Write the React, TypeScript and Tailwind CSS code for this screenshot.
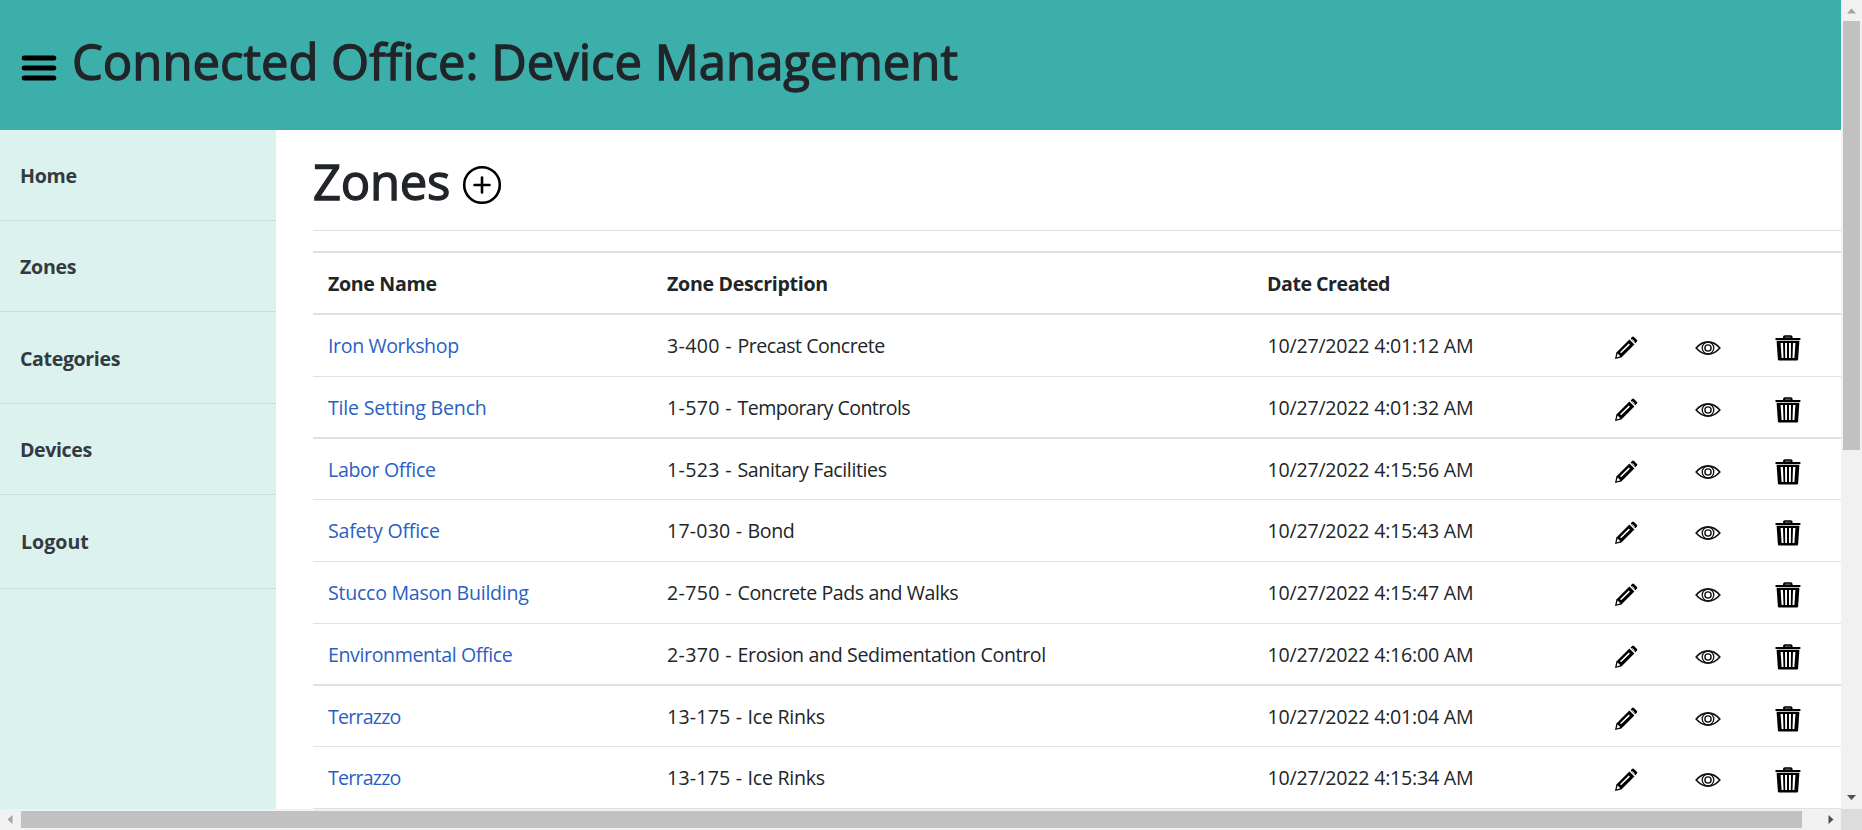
import React from 'react';

type Zone = {
  name: string;
  nameCls: string;
  code: string;
  codeCls: string;
  desc: string;
  descCls: string;
  date: string;
  row: string;
};

const zones: Zone[] = [
  { name: 'Iron Workshop', nameCls: 'tracking-[-0.38px]', code: '3-400 - ', codeCls: 'tracking-[0.36px]', desc: 'Precast Concrete', descCls: 'tracking-[-0.48px]', date: '10/27/2022 4:01:12 AM', row: 'h-[62px] border-b' },
  { name: 'Tile Setting Bench', nameCls: 'tracking-[-0.2px]', code: '1-570 - ', codeCls: 'tracking-[0.36px]', desc: 'Temporary Controls', descCls: 'tracking-[-0.56px]', date: '10/27/2022 4:01:32 AM', row: 'h-[62px] border-b-2' },
  { name: 'Labor Office', nameCls: 'tracking-[-0.34px]', code: '1-523 - ', codeCls: 'tracking-[0.36px]', desc: 'Sanitary Facilities', descCls: 'tracking-[-0.41px]', date: '10/27/2022 4:15:56 AM', row: 'h-[61px] border-b' },
  { name: 'Safety Office', nameCls: 'tracking-[-0.24px]', code: '17-030 - ', codeCls: 'tracking-[0.2px]', desc: 'Bond', descCls: 'tracking-[-0.4px]', date: '10/27/2022 4:15:43 AM', row: 'h-[62px] border-b' },
  { name: 'Stucco Mason Building', nameCls: 'tracking-[-0.27px]', code: '2-750 - ', codeCls: 'tracking-[0.36px]', desc: 'Concrete Pads and Walks', descCls: 'tracking-[-0.41px]', date: '10/27/2022 4:15:47 AM', row: 'h-[62px] border-b' },
  { name: 'Environmental Office', nameCls: 'tracking-[-0.4px]', code: '2-370 - ', codeCls: 'tracking-[0.36px]', desc: 'Erosion and Sedimentation Control', descCls: 'tracking-[-0.36px]', date: '10/27/2022 4:16:00 AM', row: 'h-[62px] border-b-2' },
  { name: 'Terrazzo', nameCls: 'tracking-[-0.78px]', code: '13-175 - ', codeCls: 'tracking-[0.2px]', desc: 'Ice Rinks', descCls: 'tracking-[-0.27px]', date: '10/27/2022 4:01:04 AM', row: 'h-[61px] border-b' },
  { name: 'Terrazzo', nameCls: 'tracking-[-0.78px]', code: '13-175 - ', codeCls: 'tracking-[0.2px]', desc: 'Ice Rinks', descCls: 'tracking-[-0.27px]', date: '10/27/2022 4:15:34 AM', row: 'h-[62px] border-b' },
];

const nav = [
  { label: 'Home', cls: 'h-[91px] pl-5 pt-0.5 tracking-[-0.25px]' },
  { label: 'Zones', cls: 'h-[91px] pl-5 pt-0.5 tracking-[-0.3px]' },
  { label: 'Categories', cls: 'h-[92px] pl-5 pt-0.5 tracking-[-0.38px]' },
  { label: 'Devices', cls: 'h-[91px] pl-5 pt-0.5 tracking-[-0.4px]' },
  { label: 'Logout', cls: 'h-[94px] pl-[21px] pt-px' },
];

function Pencil() {
  return (
    <svg width="24" height="24" viewBox="0 0 24 24">
      <path d="M1 23 2.4 16.4 15.4 3.6 20.4 8.6 7.4 21.4Z" />
      <path d="M16.6 2.6 18.4.8Q19.2.2 20 1L23 4Q23.7 4.7 23 5.5L21.3 7.3Z" />
      <path d="M3.6 17.4 6.4 20.2 2.6 21.4Z M6 16.2 14.8 7.6 15.9 8.7 7.1 17.3Z" fill="#fff" />
      <path d="M18.4 3.4 20.6 5.6" stroke="#fff" strokeWidth=".8" />
    </svg>
  );
}

function Eye() {
  return (
    <svg width="26" height="16" viewBox="0 0 26 16" fill="none" stroke="#111">
      <path d="M1.2 8Q6.5 1.8 13 1.8T24.8 8Q19.5 14.2 13 14.2T1.2 8Z" strokeWidth="1.7" />
      <circle cx="13" cy="8" r="5.8" strokeWidth="1.3" />
      <circle cx="13" cy="8" r="3.1" strokeWidth="1.4" />
    </svg>
  );
}

function Trash() {
  return (
    <svg width="26" height="26" viewBox="0 0 26 26">
      <path d="M.5 3H8V2Q8.2.3 9.8.3H15.8Q17.4.3 17.6 2V3H25.4V5H.5Z" />
      <path d="M10 2.2H15.6" stroke="#777" strokeWidth="1" />
      <path d="M1.6 5.8H24.4L23.1 24.4Q23 25.5 21.9 25.5H4.2Q3 25.5 2.9 24.4Z" />
      <path d="M5.6 8H8L8.5 23H6.6ZM10 8H12V23H10.2ZM14 8H16L15.8 23H14ZM18 8H20.4L19.4 23H17.5Z" fill="#fff" />
    </svg>
  );
}

const cols = 'grid grid-cols-[339px_600px_348px_80px_80px_81px] border-[#dee2e6]';

export default function App() {
  return (
    <div className="grid h-[830px] w-[1862px] grid-cols-[1841px_21px] grid-rows-[809px_21px] overflow-hidden bg-white font-['Open_Sans',sans-serif] text-[19.6px] leading-[30px] text-[#212529]">
      <div className="flex flex-col overflow-hidden">
        <header className="flex h-[130px] shrink-0 items-center bg-[#3dafaa] pl-[21px]">
          <svg width="36" height="28" viewBox="0 0 36 28" className="mt-[6px]" stroke="#000" strokeWidth="5" strokeLinecap="round">
            <path d="M3.2 4H32.8M3.2 14H32.8M3.2 24H32.8" />
          </svg>
          <h1 className="-mt-[9px] ml-[15px] text-[49px] leading-[60px] font-medium whitespace-nowrap [font-variant-ligatures:none] [-webkit-text-stroke:1.3px_#212529]">
            Connected Office: Device Management
          </h1>
        </header>
        <div className="flex min-h-0 flex-1">
          <aside className="w-[276px] shrink-0 bg-[#dcf2ef] font-bold text-[#343a40]">
            {nav.map((n) => (
              <div key={n.label} className={`flex items-center border-b border-[#c5dedc] ${n.cls}`}>
                {n.label}
              </div>
            ))}
          </aside>
          <main className="ml-[37px] w-[1528px] shrink-0">
            <div className="flex h-[101px] items-center border-b border-[#dee0e1]">
              <h1 className="mt-0.5 text-[49px] leading-[60px] font-medium tracking-[-0.3px] [-webkit-text-stroke:1.3px_#212529]">Zones</h1>
              <svg width="40" height="40" viewBox="0 0 40 40" className="mt-[10px] ml-[12px]" fill="none" stroke="#000" strokeWidth="2.6" strokeLinecap="round">
                <circle cx="20" cy="20" r="17.8" />
                <path d="M12.5 20H27.5M20 12.5V27.5" />
              </svg>
            </div>
            <div className={`${cols} mt-5 h-16 border-y-2 pt-4 font-bold`}>
              <div className="pl-[15px] tracking-[-0.33px]">Zone Name</div>
              <div className="pl-[15px] tracking-[-0.3px]">Zone Description</div>
              <div className="pl-[15px] tracking-[-0.48px]">Date Created</div>
            </div>
            {zones.map((z, i) => (
              <div key={i} className={`${cols} items-start pt-4 ${z.row}`}>
                <a className={`pl-[15px] text-[#2a5fc4] ${z.nameCls}`}>{z.name}</a>
                <div className="pl-[15px] whitespace-pre">
                  <span className={z.codeCls}>{z.code}</span>
                  <span className={z.descCls}>{z.desc}</span>
                </div>
                <div className="pl-[15.5px] tracking-[-0.22px]">{z.date}</div>
                <div className="pt-[5px] pl-[14px]"><Pencil /></div>
                <div className="pt-[9px] pl-[14.5px]"><Eye /></div>
                <div className="pt-[4px] pl-[14.5px]"><Trash /></div>
              </div>
            ))}
          </main>
        </div>
      </div>
      <div className="flex flex-col items-center bg-[#f1f1f1]">
        <svg width="21" height="21" viewBox="0 0 21 21" fill="#a3a3a3"><path d="M6 13.5 10.5 8.5 15 13.5Z" /></svg>
        <div className="h-[429px] w-[17px] bg-[#c1c1c1]" />
        <svg className="mt-auto" width="21" height="21" viewBox="0 0 21 21" fill="#505050"><path d="M6 7 10.5 12 15 7Z" /></svg>
      </div>
      <div className="flex items-center bg-[#f1f1f1]">
        <svg width="21" height="21" viewBox="0 0 21 21" fill="#a3a3a3"><path d="M12.5 6 7.5 10.5 12.5 15Z" /></svg>
        <div className="h-[17px] w-[1781px] bg-[#c1c1c1]" />
        <svg className="ml-auto" width="21" height="21" viewBox="0 0 21 21" fill="#505050"><path d="M8.5 6 13.5 10.5 8.5 15Z" /></svg>
      </div>
      <div className="bg-[#dcdcdc]" />
    </div>
  );
}
